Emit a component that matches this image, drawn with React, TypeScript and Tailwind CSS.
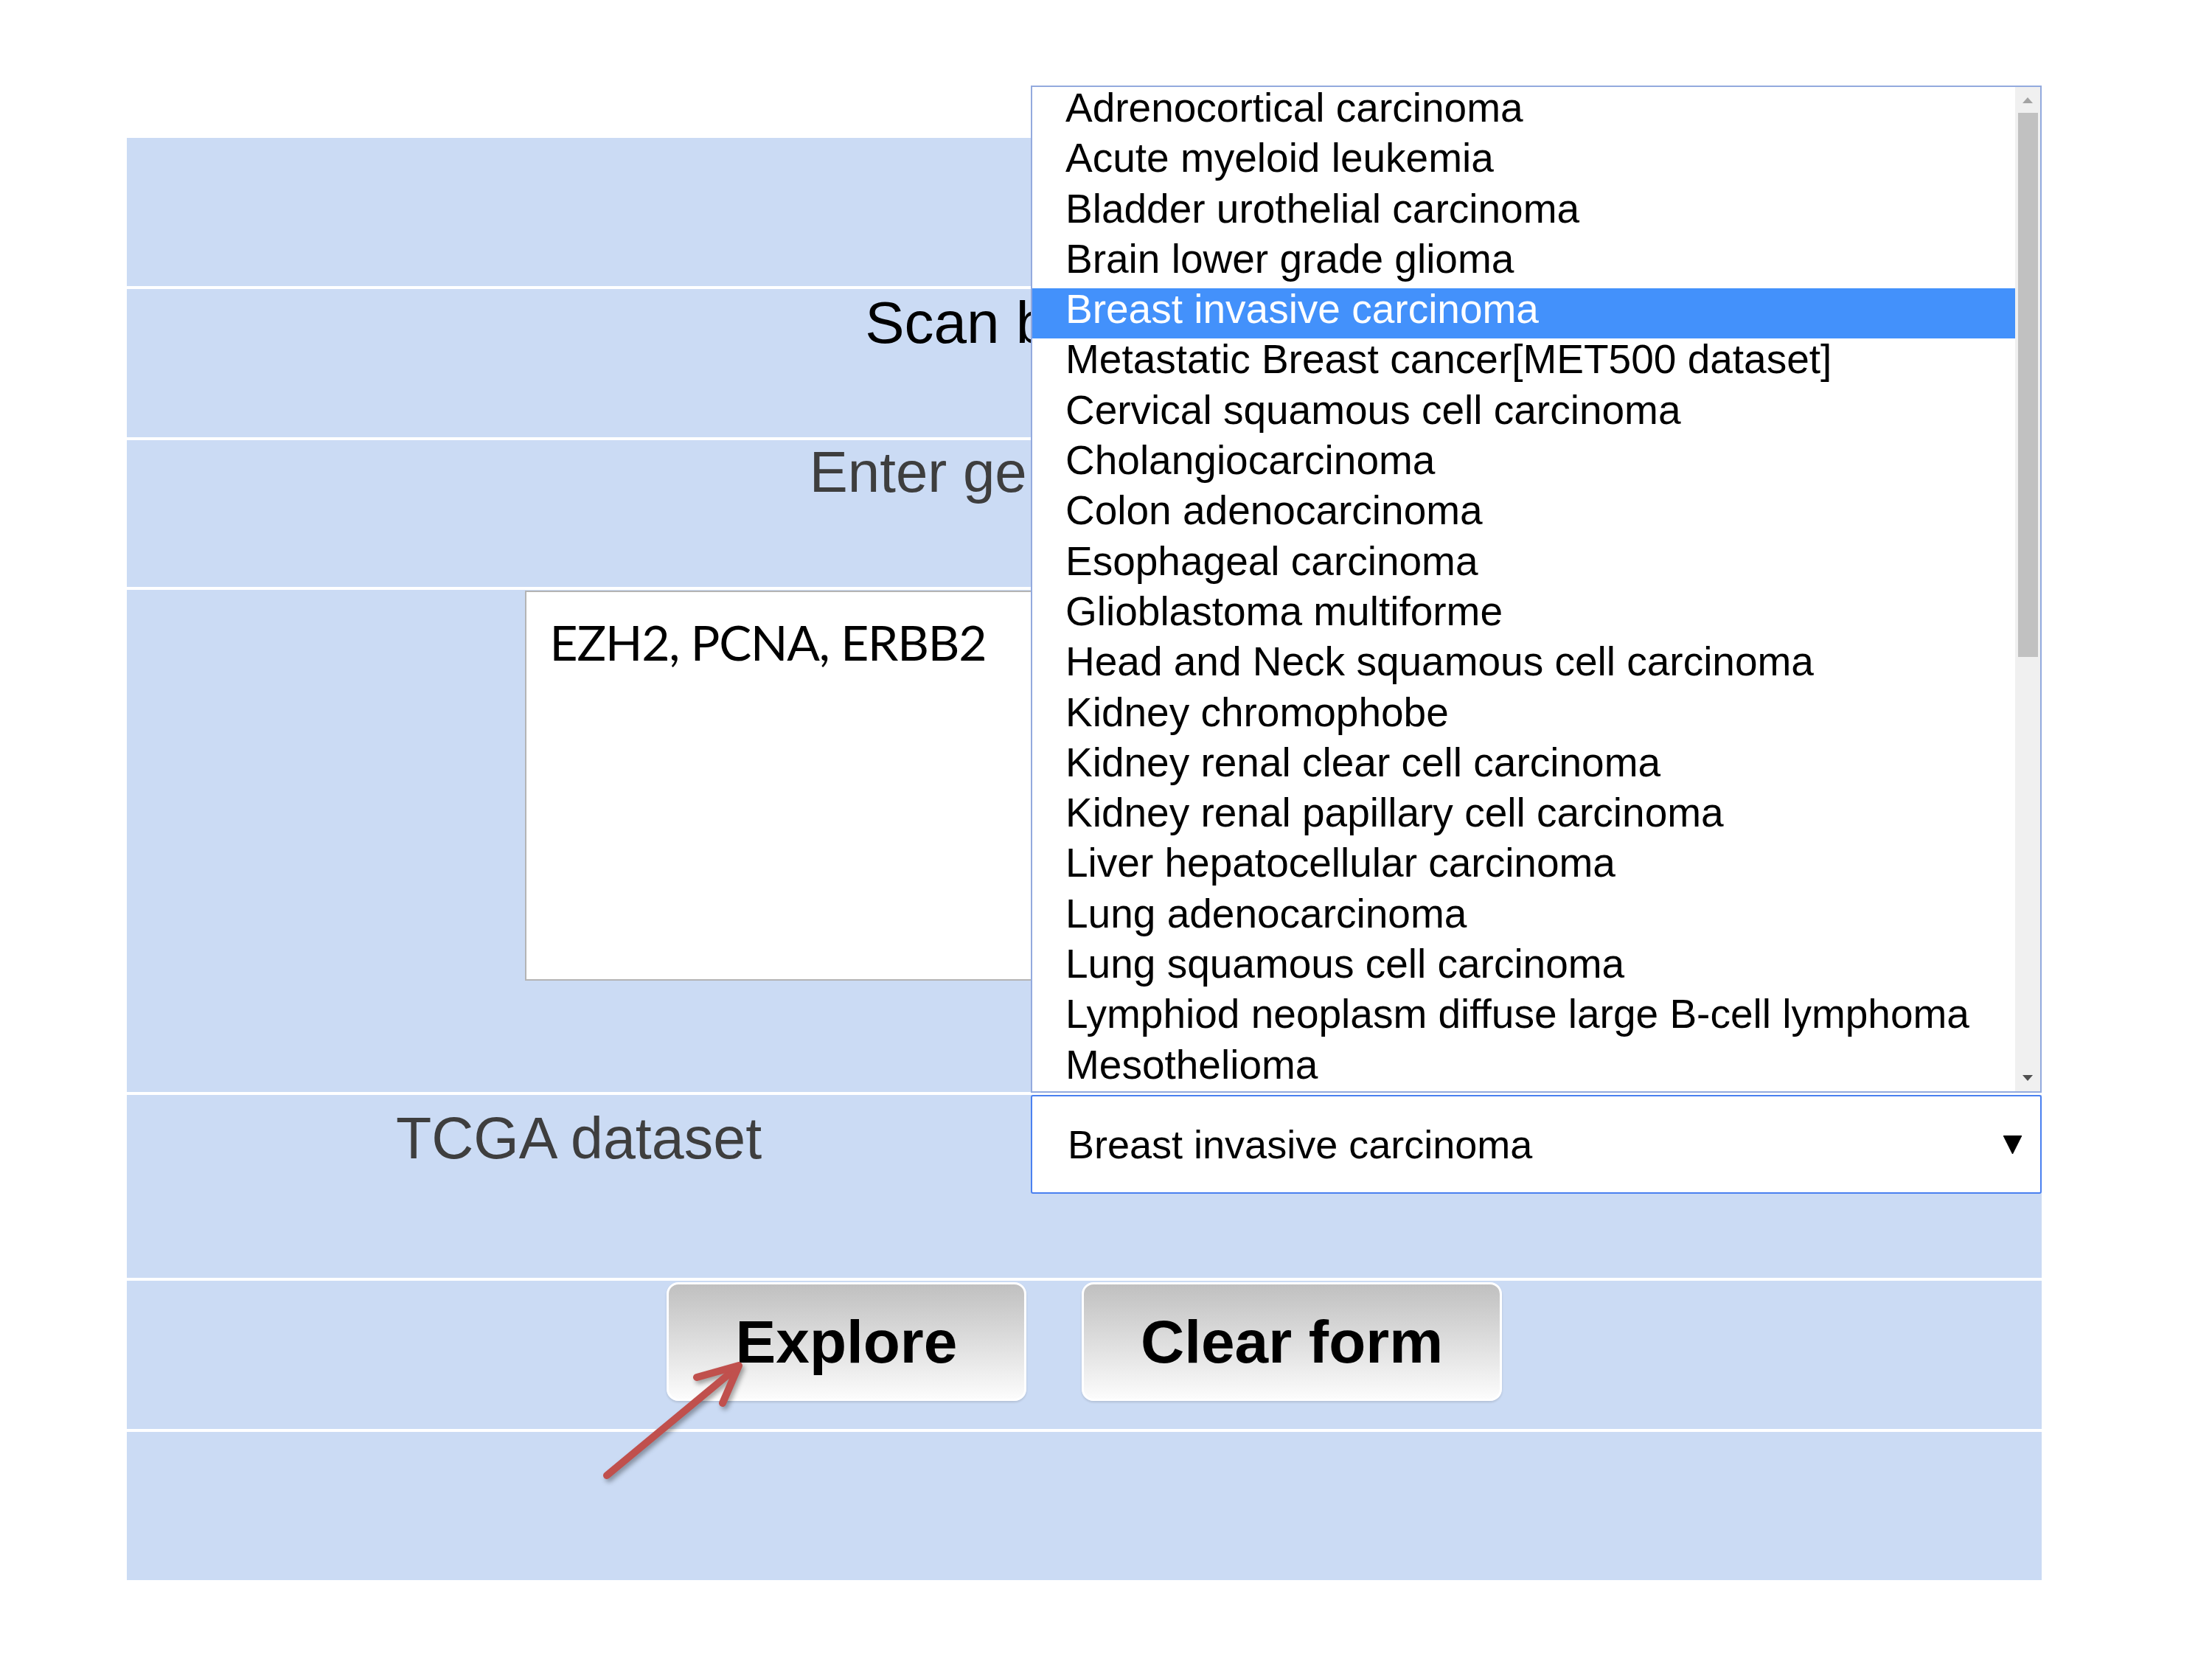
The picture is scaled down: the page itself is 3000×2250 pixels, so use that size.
const cancers = [
  'Adrenocortical carcinoma',
  'Acute myeloid leukemia',
  'Bladder urothelial carcinoma',
  'Brain lower grade glioma',
  'Breast invasive carcinoma',
  'Metastatic Breast cancer[MET500 dataset]',
  'Cervical squamous cell carcinoma',
  'Cholangiocarcinoma',
  'Colon adenocarcinoma',
  'Esophageal carcinoma',
  'Glioblastoma multiforme',
  'Head and Neck squamous cell carcinoma',
  'Kidney chromophobe',
  'Kidney renal clear cell carcinoma',
  'Kidney renal papillary cell carcinoma',
  'Liver hepatocellular carcinoma',
  'Lung adenocarcinoma',
  'Lung squamous cell carcinoma',
  'Lymphiod neoplasm diffuse large B-cell lymphoma',
  'Mesothelioma',
];

const selected = 'Breast invasive carcinoma';

function Listbox() {
  return (
    <div className="absolute left-0 right-0 bottom-[calc(100%+3px)] h-[1366px] flex bg-white border-2 border-[#93aade]">
      <ul className="flex-1 overflow-hidden">
        {cancers.map((c) => (
          <li
            key={c}
            className={`h-[68.3px] pl-[45px] text-[55px] leading-[56px] whitespace-nowrap ${
              c === selected ? 'bg-[#4391fb] text-white' : 'text-black'
            }`}
          >
            {c}
          </li>
        ))}
      </ul>
      {/* scrollbar */}
      <div className="w-[34px] bg-[#f0f0f0] flex flex-col items-center">
        <div className="h-[35px] flex items-center justify-center">
          <svg width="14" height="8" viewBox="0 0 14 8">
            <polygon points="0,8 7,0 14,8" fill="#a3a3a3" />
          </svg>
        </div>
        <div className="w-[27px] h-[738px] bg-[#c1c1c1]" />
        <div className="flex-1" />
        <div className="h-[36px] flex items-center justify-center">
          <svg width="14" height="8" viewBox="0 0 14 8">
            <polygon points="0,0 14,0 7,8" fill="#505050" />
          </svg>
        </div>
      </div>
    </div>
  );
}

export default function App() {
  return (
    <div className="relative w-[3000px] h-[2250px] bg-white pt-[187px] pl-[172px] font-['Liberation_Sans',Arial,sans-serif]">
      <div className="w-[2597px] flex flex-col gap-[4px] bg-white">
        <div className="h-[201px] bg-[#cbdbf4]" />

        <div className="h-[201px] bg-[#cbdbf4] pr-[12px] text-center text-[80px] leading-[92px] text-black">
          Scan by gene(s)
        </div>

        <div className="h-[199px] bg-[#cbdbf4] pr-[4px] text-center text-[78px] leading-[86px] text-[#3e3e3e]">
          Enter gene symbol(s)
        </div>

        <div className="h-[681px] bg-[#cbdbf4] pt-px">
          <textarea
            defaultValue="EZH2, PCNA, ERBB2"
            className="block mx-auto w-[1518px] h-[529px] resize-none bg-white border-2 border-[#b4b4b4] px-[32px] pt-[28px] text-[66px] leading-[80px] tracking-[-1.2px] text-black font-['Lato','Open_Sans',sans-serif] outline-none"
          />
        </div>

        <div className="h-[248px] bg-[#cbdbf4] grid grid-cols-[1226px_1fr] items-start">
          <div className="pt-[14px] text-center text-[79px] leading-[90px] text-[#3e3e3e]">
            TCGA dataset
          </div>
          <div className="relative">
            <Listbox />
            <div className="h-[134px] bg-white border-2 border-[#4a80f0] rounded-[3px] flex items-center justify-between pl-[48px] pr-[25px]">
              <span className="text-[54px] text-black">{selected}</span>
              <svg width="25" height="25" viewBox="0 0 25 25">
                <polygon points="0,0 25,0 12.5,25" fill="#000" strokeLinejoin="round" stroke="#000" strokeWidth="1" />
              </svg>
            </div>
          </div>
        </div>

        <div className="h-[201px] bg-[#cbdbf4] flex justify-center items-start gap-[75px] pt-[2px]">
          <button className="w-[488px] h-[161px] rounded-[16px] border-[3px] border-white bg-gradient-to-b from-[#c0c0c0] to-[#fcfcfc] shadow-[0_2px_3px_rgba(0,0,0,0.12)] text-[82px] font-bold text-black">
            Explore
          </button>
          <button className="w-[570px] h-[161px] rounded-[16px] border-[3px] border-white bg-gradient-to-b from-[#c0c0c0] to-[#fcfcfc] shadow-[0_2px_3px_rgba(0,0,0,0.12)] text-[82px] font-bold text-black">
            Clear form
          </button>
        </div>

        <div className="h-[201px] bg-[#cbdbf4]" />
      </div>

      {/* red annotation arrow */}
      <svg
        className="absolute left-[800px] top-[1830px] w-[230px] h-[200px] drop-shadow-[3px_4px_3px_rgba(0,0,0,0.35)]"
        viewBox="0 0 230 200"
        fill="none"
        stroke="#c0504d"
        strokeWidth={10}
        strokeLinecap="round"
        strokeLinejoin="round"
      >
        <path d="M23 171 L199 25" />
        <path d="M145 38 L202 22 L180 73" />
      </svg>
    </div>
  );
}
